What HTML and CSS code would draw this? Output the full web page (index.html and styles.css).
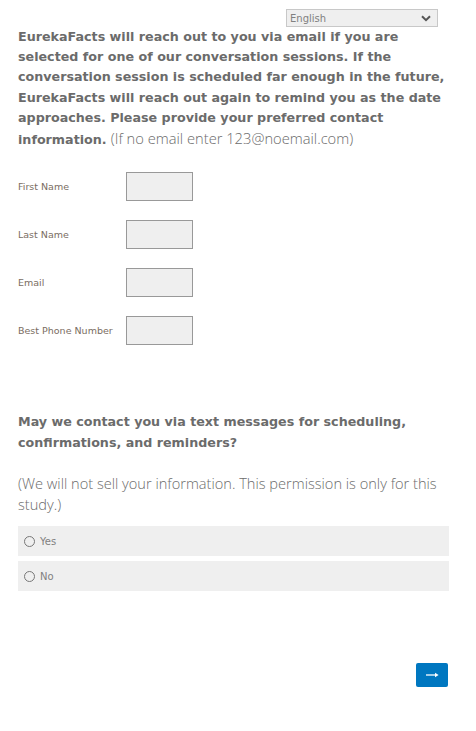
FILE: index.html
```html
<!DOCTYPE html>
<html lang="en">
<head>
<meta charset="utf-8">
<link rel="stylesheet" href="styles.css">
</head>
<body>
<div class="page">
  <div class="lang-bar">
    <div class="lang-select">
      <span>English</span>
      <svg class="chev" width="10" height="7" viewBox="0 0 10 7"><path d="M1 1.2 L5 5.2 L9 1.2" fill="none" stroke="#555" stroke-width="2"/></svg>
    </div>
  </div>
  <p class="intro"><b>EurekaFacts will reach out to you via email if you are<br>selected for one of our conversation sessions. If the<br>conversation session is scheduled far enough in the future,<br>EurekaFacts will reach out again to remind you as the date<br>approaches. Please provide your preferred contact<br>information.</b> <span class="light">(If no email enter 123@noemail.com)</span></p>
  <div class="fields">
    <div class="field"><label>First Name</label><div class="box"></div></div>
    <div class="field"><label>Last Name</label><div class="box"></div></div>
    <div class="field"><label>Email</label><div class="box"></div></div>
    <div class="field"><label>Best Phone Number</label><div class="box"></div></div>
  </div>
  <p class="question">May we contact you via text messages for scheduling,<br>confirmations, and reminders?</p>
  <p class="note">(We will not sell your information. This permission is only for this study.)</p>
  <div class="choices">
    <div class="choice"><span class="radio"></span><span>Yes</span></div>
    <div class="choice"><span class="radio"></span><span>No</span></div>
  </div>
  <div class="nav">
    <div class="next"><svg width="13" height="6" viewBox="0 0 13 6"><path d="M0 3 H10" stroke="#fff" stroke-width="1.3"/><path d="M9 0.8 L12.6 3 L9 5.2 Z" fill="#fff"/></svg></div>
  </div>
</div>
</body>
</html>
```

FILE: styles.css
```css
html, body {
  margin: 0;
  padding: 0;
  background: #fff;
}
.page {
  width: 476px;
  height: 731px;
  padding: 9px 27px 0 18px;
  box-sizing: border-box;
  font-family: "DejaVu Sans", sans-serif;
  color: #6b6b6b;
}
.lang-bar {
  display: flex;
  justify-content: flex-end;
  padding-right: 11px;
}
.lang-select {
  width: 152px;
  height: 18px;
  box-sizing: border-box;
  border: 1px solid #c8c8c8;
  background: #efefef;
  display: flex;
  align-items: center;
  justify-content: space-between;
  padding: 0 6px 0 3px;
  font-size: 10px;
  color: #808080;
}
.intro {
  margin: 0;
  font-size: 12.7px;
  line-height: 20.2px;
  white-space: nowrap;
}
.intro b {
  font-weight: 700;
}
.light {
  font-weight: 300;
  font-family: "Open Sans", sans-serif;
  font-size: 14.7px;
}
.fields {
  display: flex;
  flex-direction: column;
  gap: 19px;
  margin-top: 22px;
}
.field {
  display: flex;
  align-items: center;
}
.field label {
  width: 108px;
  font-size: 9.5px;
  color: #7a6d62;
}
.box {
  width: 67px;
  height: 29px;
  box-sizing: border-box;
  border: 1px solid #999;
  background: #efefef;
}
.question {
  margin: 67px 0 0;
  font-weight: 700;
  font-size: 12.7px;
  line-height: 20.5px;
  white-space: nowrap;
}
.note {
  margin: 20px 0 0;
  font-family: "Open Sans", sans-serif;
  font-weight: 300;
  font-size: 14.6px;
  line-height: 20.5px;
}
.choices {
  display: flex;
  flex-direction: column;
  gap: 5px;
  margin-top: 12px;
}
.choice {
  height: 30px;
  background: #efefef;
  display: flex;
  align-items: center;
  padding-left: 6px;
  gap: 5px;
  font-size: 10px;
  color: #808080;
}
.radio {
  width: 11px;
  height: 11px;
  border: 1px solid #777;
  border-radius: 50%;
  box-sizing: border-box;
}
.nav {
  display: flex;
  justify-content: flex-end;
  margin-top: 72px;
  padding-right: 1px;
}
.next {
  width: 32px;
  height: 24px;
  background: #0077c0;
  border-radius: 2px;
  display: flex;
  align-items: center;
  justify-content: center;
}
```
